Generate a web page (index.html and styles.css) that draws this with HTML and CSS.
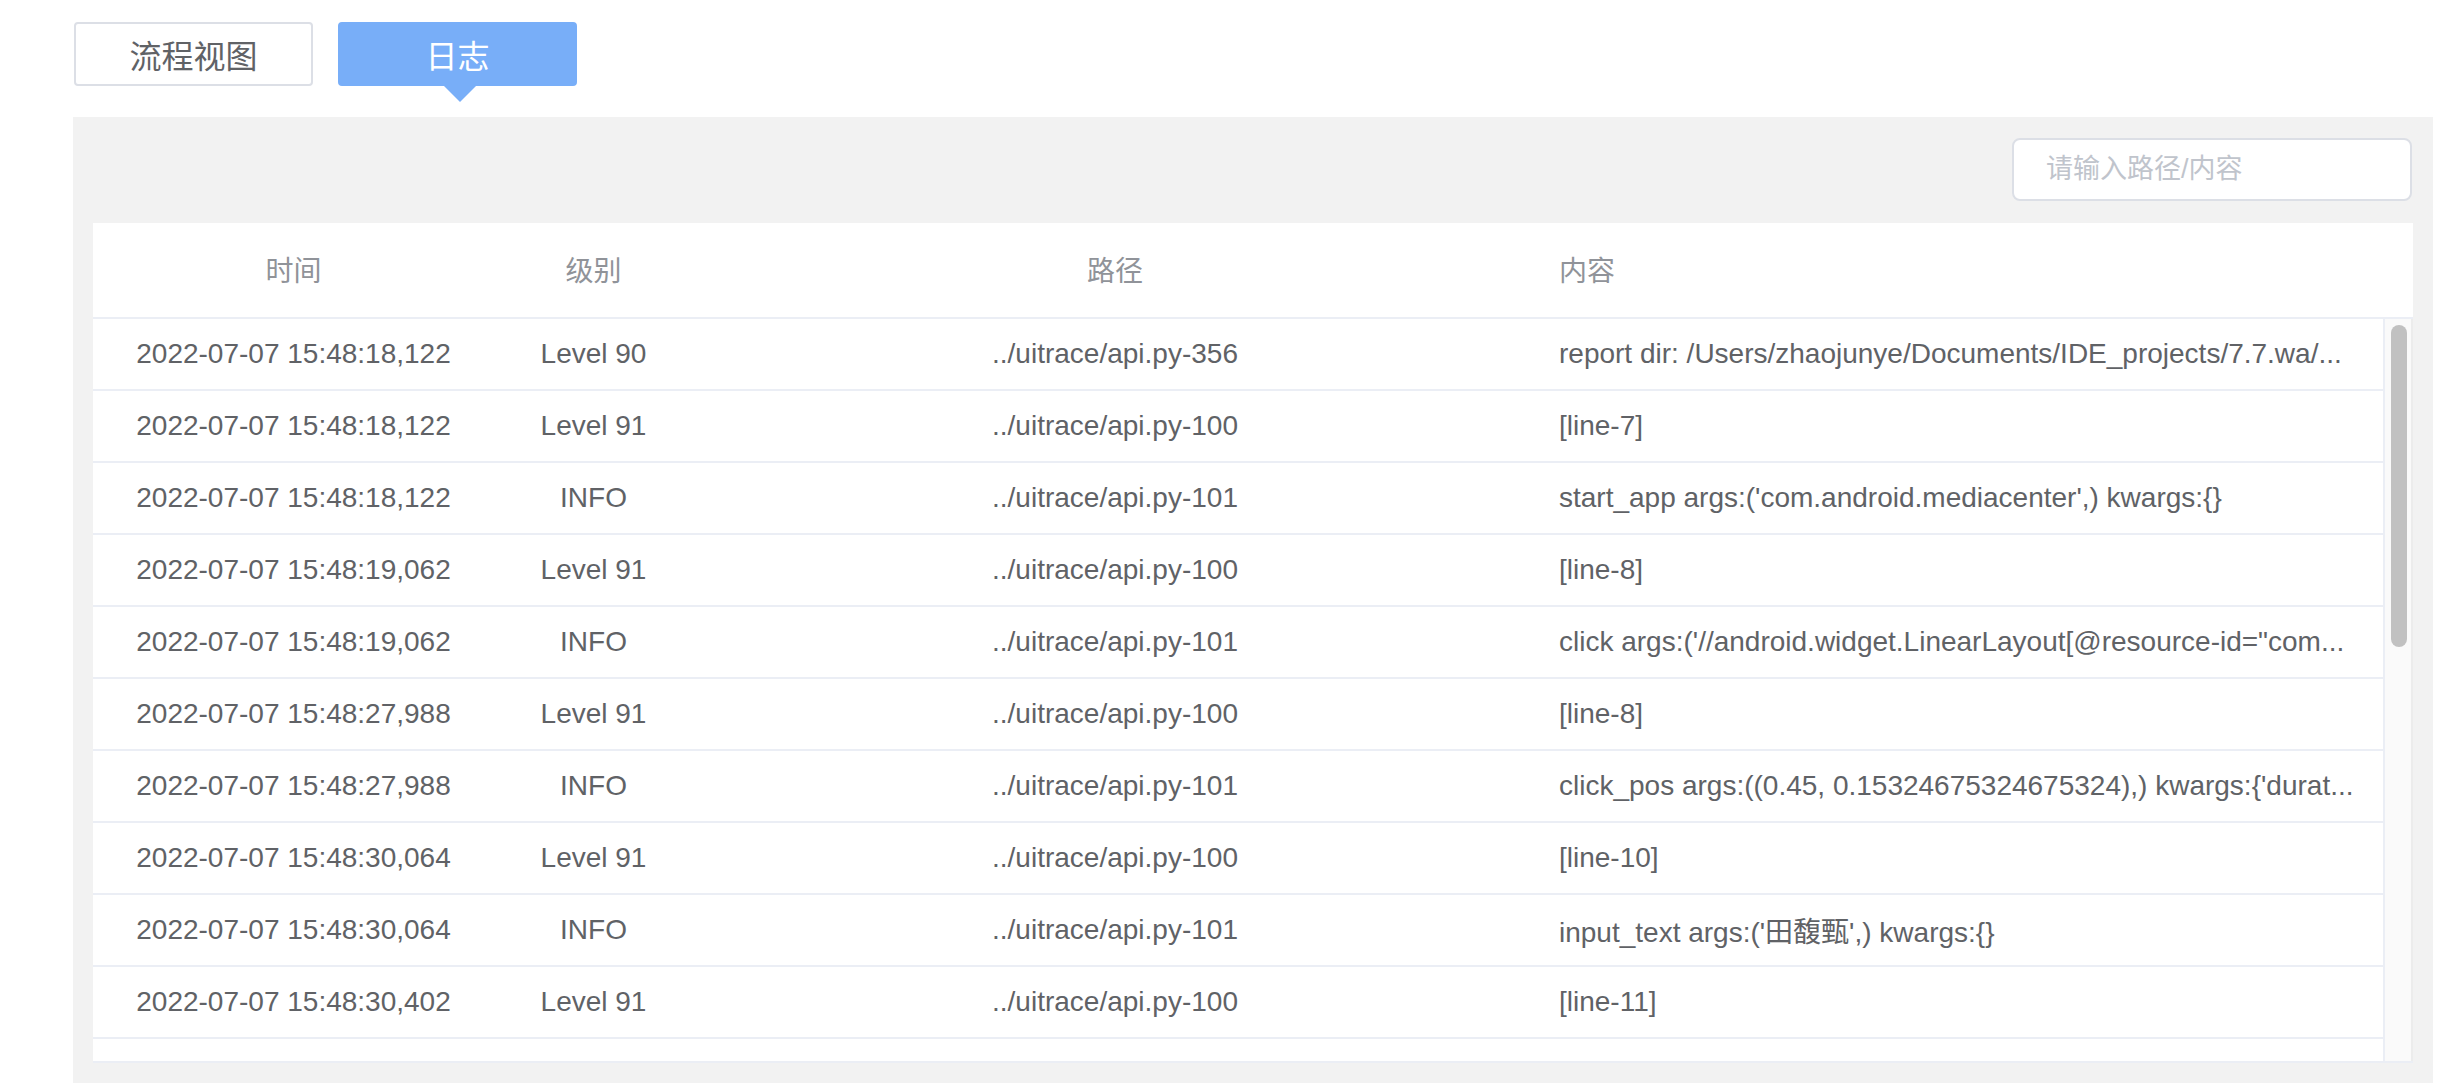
FILE: index.html
```html
<!DOCTYPE html>
<html lang="zh-CN">
<head>
<meta charset="utf-8">
<title>日志</title>
<link rel="stylesheet" href="styles.css">
</head>
<body>
  <div class="tabs">
    <div class="tab">流程视图</div>
    <div class="tab tab-active">日志</div>
  </div>
  <div class="panel">
    <div class="toolbar">
      <input class="search" type="text" placeholder="请输入路径/内容">
    </div>
    <div class="table">
      <div class="thead">
        <div class="cell c-time">时间</div>
        <div class="cell c-level">级别</div>
        <div class="cell c-path">路径</div>
        <div class="cell c-content">内容</div>
      </div>
      <div class="tbody">
        <div class="rows">
          <div class="row"><div class="cell c-time">2022-07-07 15:48:18,122</div><div class="cell c-level">Level 90</div><div class="cell c-path">../uitrace/api.py-356</div><div class="cell c-content">report dir: /Users/zhaojunye/Documents/IDE_projects/7.7.wa/...</div></div>
          <div class="row"><div class="cell c-time">2022-07-07 15:48:18,122</div><div class="cell c-level">Level 91</div><div class="cell c-path">../uitrace/api.py-100</div><div class="cell c-content">[line-7]</div></div>
          <div class="row"><div class="cell c-time">2022-07-07 15:48:18,122</div><div class="cell c-level">INFO</div><div class="cell c-path">../uitrace/api.py-101</div><div class="cell c-content">start_app args:('com.android.mediacenter',) kwargs:{}</div></div>
          <div class="row"><div class="cell c-time">2022-07-07 15:48:19,062</div><div class="cell c-level">Level 91</div><div class="cell c-path">../uitrace/api.py-100</div><div class="cell c-content">[line-8]</div></div>
          <div class="row"><div class="cell c-time">2022-07-07 15:48:19,062</div><div class="cell c-level">INFO</div><div class="cell c-path">../uitrace/api.py-101</div><div class="cell c-content">click args:('//android.widget.LinearLayout[@resource-id="com...</div></div>
          <div class="row"><div class="cell c-time">2022-07-07 15:48:27,988</div><div class="cell c-level">Level 91</div><div class="cell c-path">../uitrace/api.py-100</div><div class="cell c-content">[line-8]</div></div>
          <div class="row"><div class="cell c-time">2022-07-07 15:48:27,988</div><div class="cell c-level">INFO</div><div class="cell c-path">../uitrace/api.py-101</div><div class="cell c-content">click_pos args:((0.45, 0.15324675324675324),) kwargs:{'durat...</div></div>
          <div class="row"><div class="cell c-time">2022-07-07 15:48:30,064</div><div class="cell c-level">Level 91</div><div class="cell c-path">../uitrace/api.py-100</div><div class="cell c-content">[line-10]</div></div>
          <div class="row"><div class="cell c-time">2022-07-07 15:48:30,064</div><div class="cell c-level">INFO</div><div class="cell c-path">../uitrace/api.py-101</div><div class="cell c-content">input_text args:('田馥甄',) kwargs:{}</div></div>
          <div class="row"><div class="cell c-time">2022-07-07 15:48:30,402</div><div class="cell c-level">Level 91</div><div class="cell c-path">../uitrace/api.py-100</div><div class="cell c-content">[line-11]</div></div>
        </div>
        <div class="gutter"><div class="thumb"></div></div>
      </div>
    </div>
  </div>
</body>
</html>
```
FILE: styles.css
```css
* { box-sizing: border-box; }

html, body {
  margin: 0;
  background: #ffffff;
}

body {
  padding: 22px 21px 0 73px;
  font-family: "Liberation Sans", "Noto Sans CJK SC", sans-serif;
  color: #606266;
}

.tabs {
  display: flex;
  gap: 25px;
  margin-bottom: 31px;
  padding-left: 1px;
}

.tab {
  position: relative;
  width: 239px;
  height: 64px;
  border: 2px solid #dcdfe6;
  border-radius: 4px;
  display: flex;
  align-items: center;
  justify-content: center;
  font-size: 32px;
  color: #606266;
  background: #ffffff;
}

.tab-active {
  background: #78aef8;
  border-color: #78aef8;
  color: #ffffff;
}

.tab-active::after {
  content: "";
  position: absolute;
  left: 50%;
  top: 100%;
  margin-left: -14px;
  margin-top: 2px;
  border-left: 16px solid transparent;
  border-right: 16px solid transparent;
  border-top: 16px solid #78aef8;
}

.panel {
  background: #f2f2f2;
  padding: 21px 20px 20px 20px;
}

.toolbar {
  display: flex;
  justify-content: flex-end;
  margin-bottom: 22px;
}

.search {
  width: 400px;
  height: 63px;
  margin-right: 1px;
  border: 2px solid #dcdfe6;
  border-radius: 8px;
  background: #ffffff;
  padding: 0 32px;
  font-family: "Liberation Sans", "Noto Sans CJK SC", sans-serif;
  font-size: 27px;
  color: #606266;
  outline: none;
}

.search::placeholder {
  color: #c0c4cc;
}

.table {
  background: #ffffff;
  border-bottom: 2px solid #ebeef5;
}

.thead {
  display: grid;
  grid-template-columns: 401px 199px 844px 1fr;
  height: 96px;
  border-bottom: 2px solid #ebeef5;
  color: #909399;
  padding-bottom: 2px;
}

.tbody {
  display: flex;
  height: 742px;
}

.rows {
  flex: 1;
  overflow: hidden;
}

.row {
  display: grid;
  grid-template-columns: 401px 199px 844px 1fr;
  height: 72px;
  border-bottom: 2px solid #ebeef5;
}

.cell {
  display: flex;
  align-items: center;
  justify-content: center;
  font-size: 28px;
  white-space: nowrap;
  overflow: hidden;
}

.c-content {
  justify-content: flex-start;
  padding: 0 24px 0 22px;
  text-overflow: ellipsis;
}

.gutter {
  width: 30px;
  background: #fafafa;
  border-left: 2px solid #ebeef5;
  border-right: 2px solid #ececec;
  padding: 6px 4px 0 6px;
}

.thumb {
  width: 16px;
  height: 322px;
  border-radius: 8px;
  background: #c1c1c1;
}
```
